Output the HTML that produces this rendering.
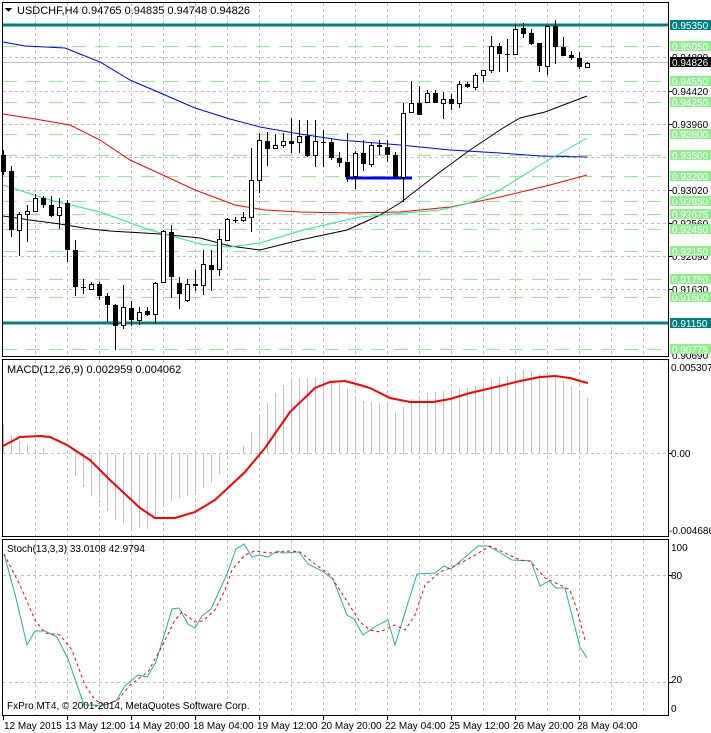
<!DOCTYPE html>
<html><head><meta charset="utf-8"><style>
html,body{margin:0;padding:0;background:#fff;width:711px;height:733px;overflow:hidden}
svg{display:block}
text{font-family:"Liberation Sans","DejaVu Sans",sans-serif;font-size:11px}
.ax{font-size:10px}
</style></head><body>
<svg width="711" height="733" viewBox="0 0 711 733" xmlns="http://www.w3.org/2000/svg" shape-rendering="crispEdges">
<rect width="711" height="733" fill="#fff"/>
<g stroke="#c0c0c0" stroke-dasharray="3,3" stroke-width="1">
<path d="M35.5 3V356M67.5 3V356M99.5 3V356M131.5 3V356M163.5 3V356M195.5 3V356M227.5 3V356M259.5 3V356M291.5 3V356M323.5 3V356M355.5 3V356M387.5 3V356M419.5 3V356M451.5 3V356M483.5 3V356M515.5 3V356M547.5 3V356M579.5 3V356M611.5 3V356M643.5 3V356"/>
<path d="M35.5 360V536M67.5 360V536M99.5 360V536M131.5 360V536M163.5 360V536M195.5 360V536M227.5 360V536M259.5 360V536M291.5 360V536M323.5 360V536M355.5 360V536M387.5 360V536M419.5 360V536M451.5 360V536M483.5 360V536M515.5 360V536M547.5 360V536M579.5 360V536M611.5 360V536M643.5 360V536"/>
<path d="M35.5 540V715M67.5 540V715M99.5 540V715M131.5 540V715M163.5 540V715M195.5 540V715M227.5 540V715M259.5 540V715M291.5 540V715M323.5 540V715M355.5 540V715M387.5 540V715M419.5 540V715M451.5 540V715M483.5 540V715M515.5 540V715M547.5 540V715M579.5 540V715M611.5 540V715M643.5 540V715"/>
<path d="M3 57.5H668M3 91.5H668M3 124.5H668M3 157.5H668M3 190.5H668M3 223.5H668M3 256.5H668M3 289.5H668M3 322.5H668"/>
<path d="M3 453.5H668M3 575.5H668M3 682.5H668"/>
</g>
<path d="M3 62.5H668" stroke="#c0c0c0"/>
<g stroke="#90ee90" stroke-width="1" stroke-dasharray="14,9">
<path d="M3 46.5H668M3 81.5H668M3 102.5H668M3 134.5H668M3 155.5H668M3 176.5H668M3 201.5H668M3 214.5H668M3 229.5H668M3 251.5H668M3 279.5H668M3 297.5H668M3 349.5H668"/>
</g>
<path d="M3 25H668M3 323H668" stroke="#008080" stroke-width="3"/>
<g fill="none" stroke-width="1" shape-rendering="auto">
<polyline stroke="#0000ff" points="3,42 25,46 65,48 100,62 130,80 165,95 195,108 230,119 260,127 300,134 340,140 400,145 450,150 500,153 540,156 587,157"/>
<polyline stroke="#ff0000" points="3,114 35,119 70,125 100,140 130,160 165,176 195,190 235,205 265,210 300,212 350,213 400,212 450,207 500,197 550,185 587,175"/>
<polyline stroke="#000" points="3,216 30,220 60,224 90,229 110,231 160,234 200,238 230,246 260,250 300,240 347,230 380,215 400,203 440,172 470,150 503,128 520,118 545,112 587,96"/>
<polyline stroke="#22ee88" points="3,185 25,192 50,200 100,212 150,230 200,244 230,247 260,243 303,230 360,217 440,210 470,203 500,190 540,165 587,138"/>
</g>
<path d="M346 178H412" stroke="#0000ff" stroke-width="3"/>
<g stroke="#000" stroke-width="1">
<path d="M3.5 150V175M11.5 166V237M19.5 212V256M27.5 205V242M35.5 194V212M43.5 196V208M51.5 196V217M59.5 198V229M67.5 200V262M75.5 240V296M83.5 279V294M91.5 282V290M99.5 282V300M107.5 293V322M115.5 304V350M123.5 285V329M131.5 301V326M139.5 307V325M147.5 307V316M155.5 282V324M163.5 230V283M171.5 225V298M179.5 277V309M187.5 279V302M195.5 270V291M203.5 250V295M211.5 250V291M219.5 229V276M227.5 218V240M235.5 217V223M243.5 212V222M251.5 148V232M259.5 133V193M267.5 132V166M275.5 134V149M283.5 133V148M291.5 118V153M299.5 120V153M307.5 120V157M315.5 120V167M323.5 130V167M331.5 138V160M339.5 152V167M347.5 133V182M355.5 151V189M363.5 140V171M371.5 143V167M379.5 140V155M387.5 140V162M395.5 152V177M403.5 103V202M411.5 81V112M419.5 86V115M427.5 90V102M435.5 90V103M443.5 92V119M451.5 94V110M459.5 81V108M467.5 82V88M475.5 73V90M483.5 70V82M491.5 36V73M499.5 43V72M507.5 39V72M515.5 25V55M523.5 23V38M531.5 29V45M539.5 43V72M547.5 25V75M555.5 20V64M563.5 37V56M571.5 51V60M579.5 52V69M587.5 62V68"/>
<path d="M81 287.5H86M233 220.5H238M321 142.5H326M505 54.5H510"/>
</g>
<g fill="#000">
<rect x="1" y="155" width="5" height="17"/><rect x="9" y="171" width="5" height="59"/>
<rect x="41" y="198" width="5" height="7"/><rect x="49" y="205" width="5" height="11"/>
<rect x="65" y="203" width="5" height="47"/><rect x="73" y="250" width="5" height="37"/>
<rect x="97" y="284" width="5" height="12"/><rect x="105" y="296" width="5" height="9"/>
<rect x="113" y="305" width="5" height="21"/><rect x="129" y="308" width="5" height="12"/>
<rect x="145" y="311" width="5" height="4"/><rect x="169" y="232" width="5" height="45"/>
<rect x="177" y="283" width="5" height="11"/><rect x="193" y="284" width="5" height="2"/>
<rect x="209" y="265" width="5" height="5"/><rect x="265" y="141" width="5" height="8"/>
<rect x="289" y="141" width="5" height="3"/><rect x="305" y="136" width="5" height="20"/>
<rect x="329" y="142" width="5" height="16"/><rect x="337" y="158" width="5" height="5"/>
<rect x="345" y="162" width="5" height="15"/><rect x="361" y="153" width="5" height="11"/>
<rect x="377" y="145" width="5" height="2"/><rect x="385" y="147" width="5" height="8"/>
<rect x="393" y="155" width="5" height="22"/><rect x="417" y="103" width="5" height="12"/>
<rect x="433" y="93" width="5" height="10"/><rect x="449" y="99" width="5" height="5"/>
<rect x="465" y="84" width="5" height="3"/><rect x="497" y="46" width="5" height="8"/>
<rect x="521" y="28" width="5" height="6"/><rect x="529" y="33" width="5" height="11"/>
<rect x="537" y="43" width="5" height="23"/><rect x="553" y="26" width="5" height="21"/>
<rect x="561" y="47" width="5" height="9"/><rect x="569" y="55" width="5" height="3"/>
<rect x="577" y="58" width="5" height="9"/>
</g>
<g fill="#fff" stroke="#000">
<rect x="17.5" y="214.5" width="4" height="16"/><rect x="25.5" y="211.5" width="4" height="3"/>
<rect x="33.5" y="198.5" width="4" height="13"/><rect x="57.5" y="207.5" width="4" height="8"/>
<rect x="89.5" y="284.5" width="4" height="5"/><rect x="121.5" y="307.5" width="4" height="18"/>
<rect x="137.5" y="312.5" width="4" height="8"/><rect x="153.5" y="283.5" width="4" height="31"/>
<rect x="161.5" y="231.5" width="4" height="51"/><rect x="185.5" y="284.5" width="4" height="16"/>
<rect x="201.5" y="264.5" width="4" height="21"/><rect x="217.5" y="239.5" width="4" height="30"/>
<rect x="225.5" y="219.5" width="4" height="21"/><rect x="241.5" y="217.5" width="4" height="3"/>
<rect x="249.5" y="180.5" width="4" height="37"/><rect x="257.5" y="140.5" width="4" height="40"/>
<rect x="273.5" y="145.5" width="4" height="3"/><rect x="281.5" y="141.5" width="4" height="4"/>
<rect x="297.5" y="136.5" width="4" height="6"/><rect x="313.5" y="141.5" width="4" height="14"/>
<rect x="353.5" y="153.5" width="4" height="23"/><rect x="369.5" y="145.5" width="4" height="19"/>
<rect x="401.5" y="113.5" width="4" height="64"/><rect x="409.5" y="103.5" width="4" height="9"/>
<rect x="425.5" y="93.5" width="4" height="9"/><rect x="441.5" y="99.5" width="4" height="4"/>
<rect x="457.5" y="84.5" width="4" height="19"/><rect x="473.5" y="75.5" width="4" height="12"/>
<rect x="481.5" y="70.5" width="4" height="5"/><rect x="489.5" y="46.5" width="4" height="24"/>
<rect x="513.5" y="29.5" width="4" height="25"/><rect x="545.5" y="26.5" width="4" height="40"/>
<rect x="585.5" y="63.5" width="4" height="4"/>
</g>
<g stroke="#c0c0c0" stroke-width="1">
<path d="M3.5 454V424M11.5 454V435M19.5 454V441M27.5 454V445M35.5 454V449M43.5 454V448M51.5 454V453M59.5 454V453M67.5 454V454M75.5 454V476M83.5 454V487M91.5 454V496M99.5 454V503M107.5 454V511M115.5 454V520M123.5 454V523M131.5 454V528M139.5 454V528M147.5 454V529M155.5 454V516M163.5 454V504M171.5 454V501M179.5 454V498M187.5 454V496M195.5 454V492M203.5 454V488M211.5 454V483M219.5 454V474M227.5 454V455M235.5 454V453M243.5 454V446M251.5 454V432M259.5 454V414M267.5 454V403M275.5 454V393M283.5 454V385M291.5 454V379M299.5 454V378M307.5 454V378M315.5 454V378M323.5 454V378M331.5 454V381M339.5 454V383M347.5 454V389M355.5 454V397M363.5 454V401M371.5 454V402M379.5 454V403M387.5 454V404M395.5 454V413M403.5 454V407M411.5 454V399M419.5 454V396M427.5 454V393M435.5 454V392M443.5 454V391M451.5 454V389M459.5 454V389M467.5 454V388M475.5 454V386M483.5 454V383M491.5 454V379M499.5 454V377M507.5 454V376M515.5 454V374M523.5 454V370M531.5 454V372M539.5 454V374M547.5 454V376M555.5 454V378M563.5 454V381M571.5 454V386M579.5 454V392M587.5 454V398"/>
</g>
<polyline fill="none" stroke="#ff0000" stroke-width="2" shape-rendering="auto" points="3,446 20,437 40,436 50,437 67,445 90,460 110,480 140,508 155,518 175,518 195,512 215,500 245,472 265,448 290,412 315,388 330,382 345,381 360,385 370,388 390,398 410,402 433,402 450,399 470,393 500,386 520,381 540,377 555,376 570,378 580,381 588,383"/>
<polyline fill="none" stroke="#20b2aa" stroke-width="1" shape-rendering="auto" points="4,554 16,598 27,645 35,631 45,631 57,637 68,659 84,705 93,705 102,706 116,701 125,686 138,675 147,677 156,662 172,609 179,608 188,624 195,628 202,616 211,609 227,574 236,549 244,544 252,557 259,555 268,557 277,551 283,553 299,552 308,564 322,571 333,579 347,615 354,619 363,635 376,626 388,620 395,645 417,574 435,573 444,566 451,569 463,559 478,546 488,546 499,552 512,560 531,561 540,586 549,581 556,588 565,588 580,647 587,658"/>
<polyline fill="none" stroke="#ff0000" stroke-width="1" stroke-dasharray="3,3" shape-rendering="auto" points="4,554 20,585 35,620 45,633 60,635 72,650 85,685 95,700 105,705 118,700 130,685 148,672 160,650 175,620 182,612 195,622 203,621 215,610 225,590 232,570 245,555 255,551 270,553 290,551 300,552 315,564 330,575 345,598 360,622 370,630 380,632 395,625 405,630 415,615 425,585 440,572 455,566 470,558 490,546 505,553 520,560 530,561 545,578 560,585 570,590 577,610 585,640"/>
<g fill="none" stroke="#000" stroke-width="1">
<rect x="2.5" y="2.5" width="666" height="354"/>
<rect x="2.5" y="359.5" width="666" height="177"/>
<rect x="2.5" y="539.5" width="666" height="176"/>
</g>
<g stroke="#000"><path d="M668 91.5H672M668 124.5H672M668 190.5H672M668 223.5H672M668 256.5H672M668 289.5H672M668 453.5H672M668 575.5H672M668 682.5H672"/>
<path d="M3.5 716V720M67.5 716V720M131.5 716V720M195.5 716V720M259.5 716V720M323.5 716V720M387.5 716V720M451.5 716V720M515.5 716V720M579.5 716V720"/></g>
<g fill="#000" class="ax">
<text class="ax" x="672" y="61">0.94890</text>
<text class="ax" x="672" y="95">0.94420</text>
<text class="ax" x="672" y="128">0.93960</text>
<text class="ax" x="672" y="194">0.93020</text>
<text class="ax" x="672" y="227">0.92560</text>
<text class="ax" x="672" y="260">0.92090</text>
<text class="ax" x="672" y="293">0.91630</text>
<text class="ax" x="672" y="359">0.90690</text>
</g>
<g fill="#90ee90">
<rect x="670" y="41" width="41" height="10"/><rect x="670" y="76" width="41" height="10"/>
<rect x="670" y="97" width="41" height="10"/><rect x="670" y="129" width="41" height="10"/>
<rect x="670" y="150" width="41" height="10"/><rect x="670" y="171" width="41" height="10"/>
<rect x="670" y="196" width="41" height="10"/><rect x="670" y="209" width="41" height="10"/>
<rect x="670" y="224" width="41" height="10"/><rect x="670" y="246" width="41" height="10"/>
<rect x="670" y="274" width="41" height="10"/><rect x="670" y="292" width="41" height="10"/>
<rect x="670" y="344" width="41" height="10"/>
</g>
<rect x="670" y="20" width="41" height="10" fill="#008080"/>
<rect x="670" y="318" width="41" height="10" fill="#008080"/>
<rect x="670" y="57" width="41" height="10" fill="#000"/>
<g fill="#fff">
<text class="ax" x="672" y="29">0.95350</text><text class="ax" x="672" y="50">0.95050</text>
<text class="ax" x="672" y="66">0.94826</text><text class="ax" x="672" y="85">0.94550</text>
<text class="ax" x="672" y="106">0.94250</text><text class="ax" x="672" y="138">0.93800</text>
<text class="ax" x="672" y="159">0.93500</text><text class="ax" x="672" y="180">0.93200</text>
<text class="ax" x="672" y="205">0.92850</text><text class="ax" x="672" y="218">0.92675</text>
<text class="ax" x="672" y="233">0.92450</text><text class="ax" x="672" y="255">0.92150</text>
<text class="ax" x="672" y="283">0.91750</text><text class="ax" x="672" y="301">0.91500</text>
<text class="ax" x="672" y="327">0.91150</text><text class="ax" x="672" y="353">0.90775</text>
</g>
<g fill="#000">
<text class="ax" x="671" y="371">0.005307</text>
<text class="ax" x="671" y="457">0.00</text>
<text class="ax" x="669" y="534">-0.004686</text>
<text class="ax" x="671" y="551">100</text>
<text class="ax" x="671" y="579">80</text>
<text class="ax" x="671" y="683">20</text>
<text class="ax" x="671" y="712">0</text>
</g>
<path d="M5 8H12L8.5 12Z" fill="#000"/>
<text x="17" y="14" fill="#000">USDCHF,H4  0.94765 0.94835 0.94748 0.94826</text>
<text x="7" y="373" fill="#000">MACD(12,26,9) 0.002959 0.004062</text>
<text x="7" y="552" fill="#000" style="font-size:10px">Stoch(13,3,3) 33.0108 42.9794</text>
<text x="7" y="709" fill="#000" style="font-size:10px">FxPro MT4, © 2001-2014, MetaQuotes Software Corp.</text>
<g fill="#000">
<text x="4" y="729" style="font-size:10px">12 May 2015</text>
<text x="65" y="729" style="font-size:10px">13 May 12:00</text>
<text x="129" y="729" style="font-size:10px">14 May 20:00</text>
<text x="193" y="729" style="font-size:10px">18 May 04:00</text>
<text x="257" y="729" style="font-size:10px">19 May 12:00</text>
<text x="321" y="729" style="font-size:10px">20 May 20:00</text>
<text x="385" y="729" style="font-size:10px">22 May 04:00</text>
<text x="449" y="729" style="font-size:10px">25 May 12:00</text>
<text x="513" y="729" style="font-size:10px">26 May 20:00</text>
<text x="577" y="729" style="font-size:10px">28 May 04:00</text>
</g>
</svg>
</body></html>
